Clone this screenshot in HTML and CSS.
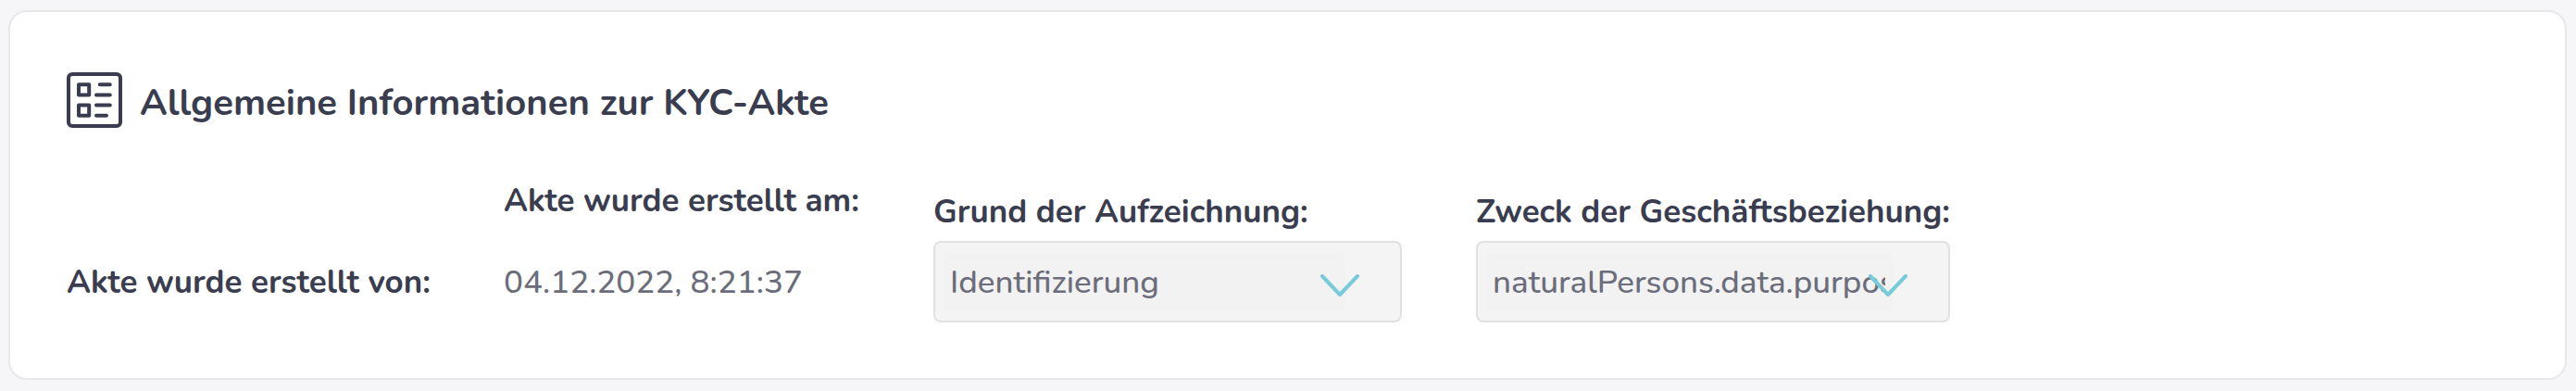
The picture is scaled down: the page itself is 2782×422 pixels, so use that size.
FILE: index.html
```html
<!DOCTYPE html>
<html lang="de">
<head>
  <meta charset="UTF-8">
  <meta name="viewport" content="width=device-width, initial-scale=1.0">
  <title>KYC-Akte</title>
  <link rel="stylesheet" href="styles.css">
</head>
<body>
  <section class="card">
    <header class="card-header">
      <svg class="card-icon" viewBox="0 0 60 60" fill="none" stroke="currentColor" stroke-width="4" stroke-linecap="round" stroke-linejoin="round" aria-hidden="true">
        <rect x="2" y="2" width="56" height="56" rx="4"/>
        <rect x="13" y="13.2" width="11.2" height="11.2"/>
        <rect x="13" y="35.6" width="11.2" height="11.2"/>
        <path d="M35.8 13.2H46.8M32 24.4H46.8M32 35.6H46.8M32 46.8H43"/>
      </svg>
      <h2 class="card-title">Allgemeine Informationen zur KYC-Akte</h2>
    </header>

    <div class="info-row">
      <div class="info">
        <span class="info-label">Akte wurde erstellt von:</span>
      </div>
      <div class="info">
        <span class="info-label">Akte wurde erstellt am:</span>
        <span class="info-value">04.12.2022, 8:21:37</span>
      </div>
      <div class="field">
        <label class="info-label" for="grund">Grund der Aufzeichnung:</label>
        <div class="select-box">
          <select id="grund" disabled>
            <option>Identifizierung</option>
          </select>
          <svg class="chevron" viewBox="0 0 42 24" aria-hidden="true"><path d="M2 2L21 22L40 2"/></svg>
        </div>
      </div>
      <div class="field">
        <label class="info-label" for="zweck">Zweck der Geschäftsbeziehung:</label>
        <div class="select-box">
          <select id="zweck" disabled>
            <option>naturalPersons.data.purposes</option>
          </select>
          <svg class="chevron" viewBox="0 0 42 24" aria-hidden="true"><path d="M2 2L21 22L40 2"/></svg>
        </div>
      </div>
    </div>
  </section>
</body>
</html>
```

FILE: styles.css
```css
:root {
  --bg: #f6f6f9;
  --border: #e8e8ea;
  --dark: #3a3d4f;
  --grey: #6b6d7b;
  --accent: #78cbd9;
}

* {
  box-sizing: border-box;
}

body {
  margin: 0;
  padding: 11px 10px 12px 9px;
  background: var(--bg);
  color: var(--dark);
  font-family: Nunito, Lato, sans-serif;
  font-size: 35px;
  font-weight: 500;
  line-height: 48px;
}

.card {
  padding: 65px 61px 60px;
  background: #fff;
  border: 2px solid var(--border);
  border-radius: 20px;
}

.card-header {
  display: flex;
  align-items: center;
  gap: 19px;
}

.card-icon {
  width: 60px;
  height: 60px;
}

.card-title {
  margin: 0;
  padding-top: 6px;
  font-size: 40px;
  font-weight: 700;
  line-height: 54px;
}

.info-row {
  display: grid;
  grid-template-columns: 392px 384px 506px 512px;
  align-items: end;
  gap: 80px;
  margin-top: 55px;
}

.info {
  display: flex;
  flex-direction: column;
  gap: 40px;
  padding-bottom: 19px;
}

.field {
  display: flex;
  flex-direction: column;
  gap: 7px;
}

.info-label {
  font-weight: 700;
  white-space: nowrap;
}

.info-value {
  color: var(--grey);
}

.select-box {
  position: relative;
  height: 88px;
  padding: 11px 60px 11px 10px;
  background: #f4f4f4;
  border: 2px solid #e1e1e1;
  border-radius: 8px;
}

.select-box select {
  width: 100%;
  height: 62px;
  padding: 2px 8px 0 6px;
  appearance: none;
  background: #f2f2f2;
  border: none;
  color: var(--grey);
  font: inherit;
  opacity: 1;
}

.chevron {
  position: absolute;
  top: 34px;
  right: 44px;
  width: 42px;
  height: 24px;
  fill: none;
  stroke: var(--accent);
  stroke-width: 4;
  stroke-linecap: round;
  stroke-linejoin: round;
}
```
